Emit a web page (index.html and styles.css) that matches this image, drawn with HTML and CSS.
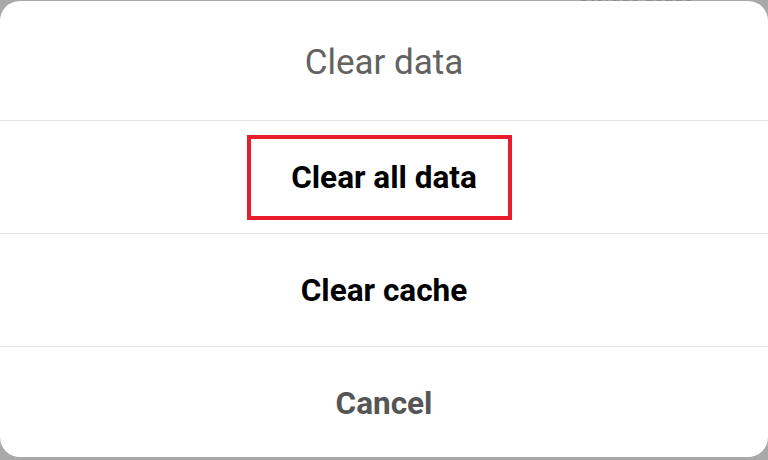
FILE: index.html
```html
<!DOCTYPE html>
<html>
<head>
<meta charset="utf-8">
<link rel="stylesheet" href="styles.css">
</head>
<body>
<div class="backdrop">
  <div class="behind">Storage usage</div>
  <div class="dialog">
    <div class="title">Clear data</div>
    <div class="row"><span class="highlight">Clear all data</span></div>
    <div class="row">Clear cache</div>
    <div class="row cancel">Cancel</div>
  </div>
</div>
</body>
</html>
```

FILE: styles.css
```css
html, body {
  margin: 0;
  padding: 0;
}
body {
  width: 768px;
  height: 460px;
  background: #a9a9a9;
  font-family: Roboto, "Noto Sans", sans-serif;
  overflow: hidden;
}
.backdrop {
  position: relative;
  height: 460px;
  padding-top: 1px;
  box-sizing: border-box;
}
.behind {
  position: absolute;
  top: -16px;
  left: 578px;
  font-size: 18px;
  color: #8a8a8a;
}
.dialog {
  position: relative;
  height: 456px;
  background: #ffffff;
  border-radius: 20px;
  display: flex;
  flex-direction: column;
}
.title {
  height: 119px;
  display: flex;
  align-items: center;
  justify-content: center;
  font-size: 35px;
  color: #626262;
  padding-top: 4px;
  box-sizing: border-box;
}
.row {
  height: 113px;
  border-top: 1px solid #e6e6e6;
  box-sizing: border-box;
  display: flex;
  align-items: center;
  justify-content: center;
  font-size: 31.5px;
  font-weight: 700;
  color: #000000;
}
.row.cancel {
  flex: 1;
  color: #555555;
  padding-top: 2px;
}
.highlight {
  display: inline-block;
  border: 4px solid #e91d2a;
  padding: 20px 31px 20px 40px;
  margin-right: 9px;
  line-height: 37px;
}
```
